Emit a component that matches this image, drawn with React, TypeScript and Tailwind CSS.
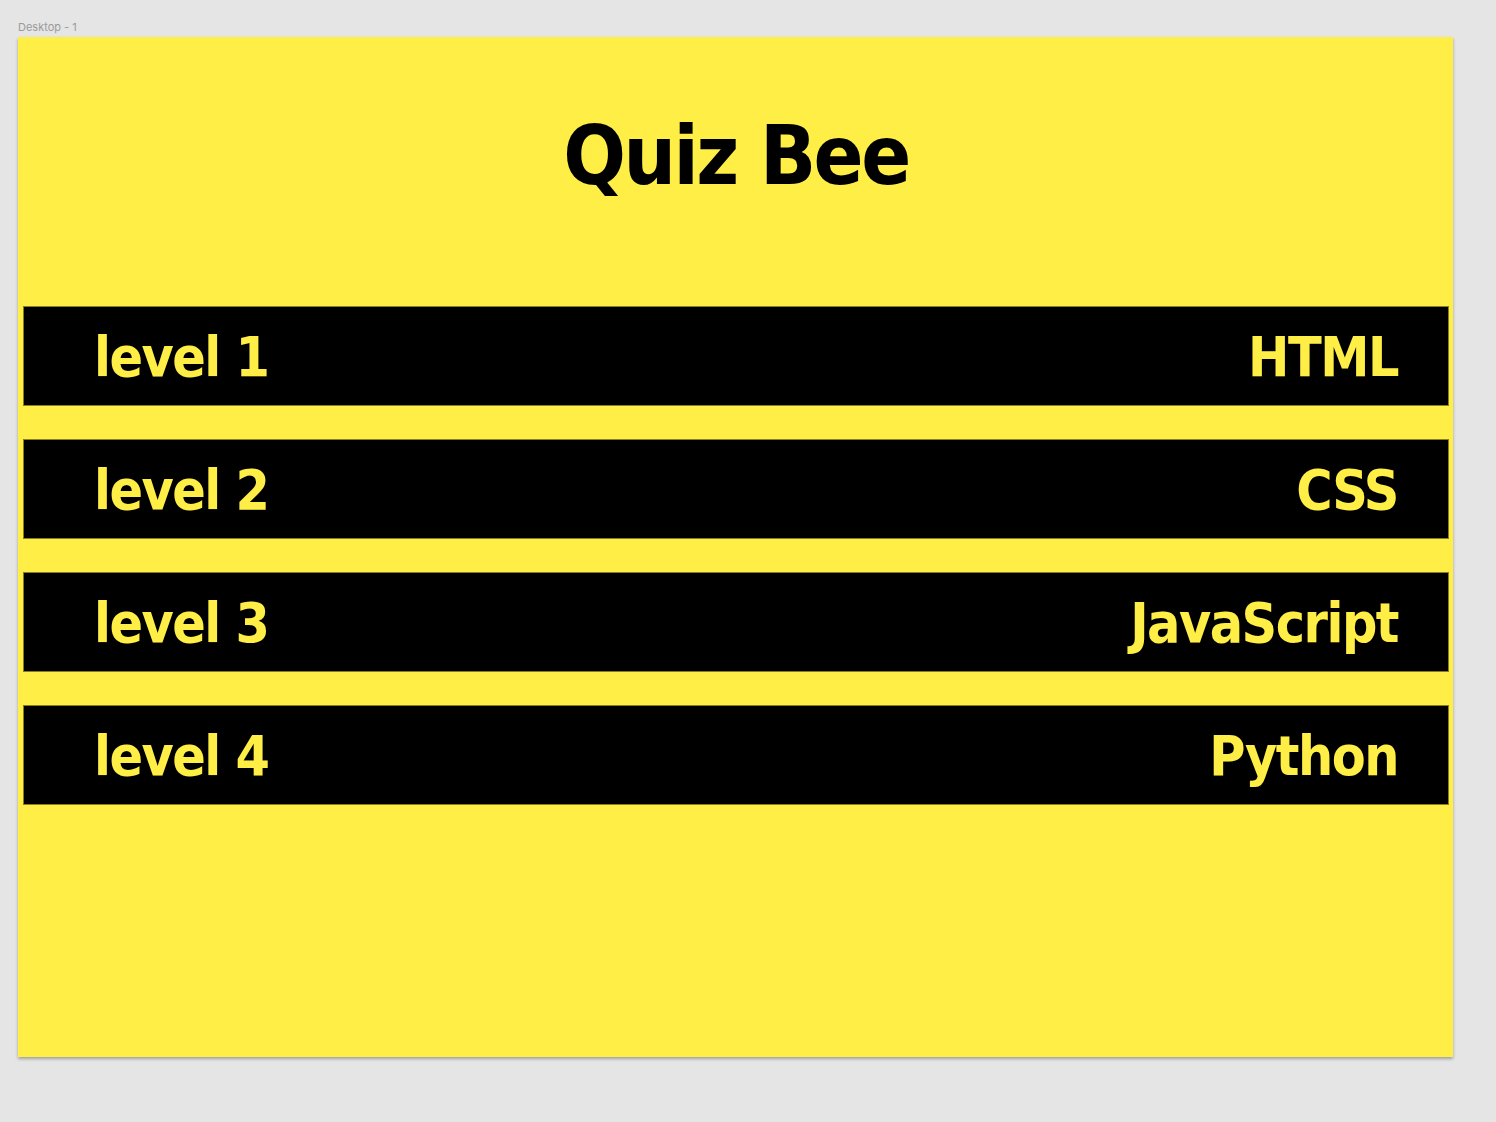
export default function App() {
  const rows = [
    { l: "level 1", r: "HTML" },
    { l: "level 2", r: "CSS" },
    { l: "level 3", r: "JavaScript" },
    { l: "level 4", r: "Python" },
  ];
  return (
    <div className="w-[1496px] h-[1122px] bg-[#e5e5e5] pt-[20px] pl-[18px] overflow-hidden">
      <div className="h-[17px] text-[11px] leading-[14px] text-[#9a9a9a]" style={{ fontFamily: "Inter, 'Noto Sans', sans-serif" }}>
        Desktop - 1
      </div>
      <div
        className="w-[1435px] h-[1020px] bg-[#ffee45] shadow-[0_2px_3px_rgba(0,0,0,0.3)] pl-[5px] pr-[4px]"
        style={{ fontFamily: "'DejaVu Sans Condensed', 'DejaVu Sans', sans-serif" }}
      >
        <div className="h-[269px] flex justify-center pt-[78px]">
          <h1 className="text-[82px] leading-none font-bold text-black tracking-[-2.5px]">Quiz Bee</h1>
        </div>
        <div className="flex flex-col gap-[33px]">
          {rows.map((row) => (
            <div
              key={row.l}
              className="h-[100px] bg-black border border-[#8a7f1c] flex items-center justify-between pl-[70px] pr-[50px] pt-[2px]"
            >
              <span className="text-[55px] leading-none font-bold text-[#ffee45] tracking-[-1.5px]">{row.l}</span>
              <span className="text-[55px] leading-none font-bold text-[#ffee45] tracking-[-1.5px]">{row.r}</span>
            </div>
          ))}
        </div>
      </div>
    </div>
  );
}
